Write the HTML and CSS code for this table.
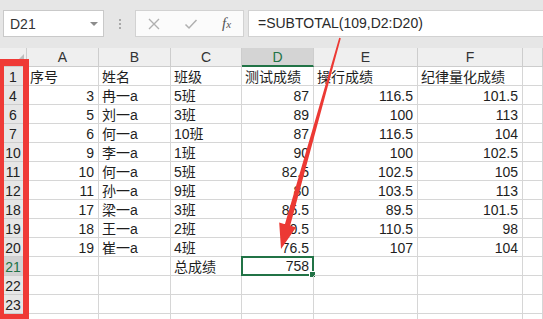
FILE: index.html
```html
<!DOCTYPE html>
<html lang="zh">
<head>
<meta charset="utf-8">
<link rel="stylesheet" href="styles.css">
</head>
<body>
<div class="app">
  <div class="toolbar">
    <div class="namebox"><span>D21</span><span class="dd"></span></div>
    <div class="sep"><i></i><i></i><i></i></div>
    <div class="fbtns">
      <svg class="ico" width="14" height="14" viewBox="0 0 14 14"><path d="M2 2L12 12M12 2L2 12" stroke="#b0b0b0" stroke-width="1.4" fill="none"/></svg>
      <svg class="ico" width="14" height="14" viewBox="0 0 14 14"><path d="M1.5 7.5L5 11L12.5 3" stroke="#b0b0b0" stroke-width="1.5" fill="none"/></svg>
      <span class="fx">f<small>x</small></span>
    </div>
    <div class="finput">=SUBTOTAL(109,D2:D20)</div>
  </div>

  <div class="sheet">
    <div class="corner"><span class="tri"></span></div>
    <div class="h">A</div><div class="h">B</div><div class="h">C</div><div class="h sel">D</div><div class="h">E</div><div class="h">F</div><div class="h"></div>

    <div class="rh">1</div><div class="c">序号</div><div class="c">姓名</div><div class="c">班级</div><div class="c">测试成绩</div><div class="c">操行成绩</div><div class="c">纪律量化成绩</div><div class="c"></div>
    <div class="rh">4</div><div class="c n">3</div><div class="c">冉一a</div><div class="c">5班</div><div class="c n">87</div><div class="c n">116.5</div><div class="c n">101.5</div><div class="c"></div>
    <div class="rh">6</div><div class="c n">5</div><div class="c">刘一a</div><div class="c">3班</div><div class="c n">89</div><div class="c n">100</div><div class="c n">113</div><div class="c"></div>
    <div class="rh">7</div><div class="c n">6</div><div class="c">何一a</div><div class="c">10班</div><div class="c n">87</div><div class="c n">116.5</div><div class="c n">104</div><div class="c"></div>
    <div class="rh">10</div><div class="c n">9</div><div class="c">李一a</div><div class="c">1班</div><div class="c n">90</div><div class="c n">100</div><div class="c n">102.5</div><div class="c"></div>
    <div class="rh">11</div><div class="c n">10</div><div class="c">何一a</div><div class="c">5班</div><div class="c n">82.5</div><div class="c n">102.5</div><div class="c n">105</div><div class="c"></div>
    <div class="rh">12</div><div class="c n">11</div><div class="c">孙一a</div><div class="c">9班</div><div class="c n">80</div><div class="c n">103.5</div><div class="c n">113</div><div class="c"></div>
    <div class="rh">18</div><div class="c n">17</div><div class="c">梁一a</div><div class="c">3班</div><div class="c n">85.5</div><div class="c n">89.5</div><div class="c n">101.5</div><div class="c"></div>
    <div class="rh">19</div><div class="c n">18</div><div class="c">王一a</div><div class="c">2班</div><div class="c n">80.5</div><div class="c n">110.5</div><div class="c n">98</div><div class="c"></div>
    <div class="rh">20</div><div class="c n">19</div><div class="c">崔一a</div><div class="c">4班</div><div class="c n">76.5</div><div class="c n">107</div><div class="c n">104</div><div class="c"></div>
    <div class="rh rsel">21</div><div class="c"></div><div class="c"></div><div class="c">总成绩</div><div class="c n active">758<span class="handle"></span></div><div class="c"></div><div class="c"></div><div class="c"></div>
    <div class="rh">22</div><div class="c"></div><div class="c"></div><div class="c"></div><div class="c"></div><div class="c"></div><div class="c"></div><div class="c"></div>
    <div class="rh">23</div><div class="c"></div><div class="c"></div><div class="c"></div><div class="c"></div><div class="c"></div><div class="c"></div><div class="c"></div>
    <div class="rh"></div><div class="c"></div><div class="c"></div><div class="c"></div><div class="c"></div><div class="c"></div><div class="c"></div><div class="c"></div>
  </div>

  <div class="redbox"></div>
  <svg class="arrow" width="543" height="319" viewBox="0 0 543 319">
    <polygon points="340.8,38.2 290.2,225.6 296,227.4 281,249 279.2,222.5 284.9,224.2 339.2,37.8" fill="#ec3934"/>
  </svg>
</div>
</body>
</html>
```

FILE: styles.css
```css
html, body {
  margin: 0;
  padding: 0;
  width: 543px;
  height: 319px;
  overflow: hidden;
  background: #ffffff;
}

.app {
  position: relative;
  width: 543px;
  height: 319px;
  overflow: hidden;
  font-family: "Liberation Sans", "Noto Sans CJK SC", sans-serif;
  color: #1e1e1e;
}

.toolbar {
  height: 48px;
  background: #e6e6e6;
  display: flex;
  align-items: flex-start;
  padding-top: 10px;
  padding-left: 3px;
  box-sizing: border-box;
}

.namebox {
  width: 101px;
  height: 27px;
  box-sizing: border-box;
  background: #fff;
  border: 1px solid #c9c9c9;
  display: flex;
  align-items: center;
  justify-content: space-between;
  padding: 0 5px 0 6px;
  font-size: 14px;
  color: #333;
}

.dd {
  width: 0;
  height: 0;
  border-left: 4px solid transparent;
  border-right: 4px solid transparent;
  border-top: 4px solid #8c8c8c;
}

.sep {
  width: 31px;
  height: 27px;
  display: flex;
  flex-direction: column;
  align-items: center;
  justify-content: center;
  gap: 2px;
}

.sep i {
  display: block;
  width: 2px;
  height: 2px;
  background: #a9a9a9;
}

.fbtns {
  width: 109px;
  height: 27px;
  box-sizing: border-box;
  background: #fbfbfb;
  border: 1px solid #d2d2d2;
  display: flex;
  align-items: center;
  padding-left: 11px;
  gap: 23px;
}

.fx {
  font-family: "Liberation Serif", serif;
  font-style: italic;
  font-size: 15px;
  color: #555;
  margin-left: 1px;
}

.fx small {
  font-size: 11px;
}

.finput {
  margin-left: 4px;
  flex: 1;
  height: 27px;
  box-sizing: border-box;
  background: #fff;
  border: 1px solid #d2d2d2;
  border-right: none;
  padding-left: 9px;
  font-size: 14px;
  line-height: 25px;
  color: #2a2a2a;
  white-space: nowrap;
}

.sheet {
  display: grid;
  grid-template-columns: 27px 72px 72px 71px 72px 104px 105px 1fr;
  grid-auto-rows: 19px;
  font-size: 14px;
}

.corner, .h, .rh, .c {
  box-sizing: border-box;
  border-right: 1px solid #d6d6d6;
  border-bottom: 1px solid #d6d6d6;
  white-space: nowrap;
  overflow: hidden;
}

.corner {
  position: relative;
  background: #efefef;
  border-color: #cdcdcd;
}

.tri {
  position: absolute;
  right: 2px;
  bottom: 2px;
  width: 0;
  height: 0;
  border-left: 10px solid transparent;
  border-bottom: 10px solid #bdbdbd;
}

.h {
  background: #efefef;
  border-color: #cdcdcd;
  text-align: center;
  line-height: 18px;
  color: #333;
}

.h.sel {
  background: #d4d4d4;
  border-bottom: 2px solid #217346;
  color: #217346;
}

.rh {
  background: #e6e6e6;
  border-color: #cdcdcd;
  text-align: center;
  line-height: 20px;
  color: #222;
}

.rh.rsel {
  background: #d2d2d2;
  color: #217346;
}

.c {
  position: relative;
  padding: 0 3px 0 3px;
  line-height: 20px;
}

.c.n {
  text-align: right;
  padding-right: 4px;
}

.c.active {
  border: 2px solid #217346;
  margin: -1px 0 0 -1px;
  line-height: 17px;
  overflow: visible;
  padding-right: 3px;
}

.handle {
  position: absolute;
  right: -4px;
  bottom: -4px;
  width: 5px;
  height: 5px;
  background: #217346;
  border: 1px solid #fff;
}

.redbox {
  position: absolute;
  left: 0;
  top: 59px;
  width: 29px;
  height: 260px;
  box-sizing: border-box;
  border-style: solid;
  border-color: #ef3a36;
  border-width: 7px 6px 5px 4px;
  pointer-events: none;
}

.arrow {
  position: absolute;
  left: 0;
  top: 0;
  pointer-events: none;
}
```
